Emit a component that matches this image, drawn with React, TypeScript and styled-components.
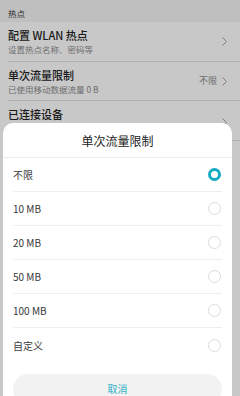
import React from "react";
import styled, { createGlobalStyle } from "styled-components";

const Global = createGlobalStyle`
  html, body { margin: 0; padding: 0; }
  body { width: 240px; height: 396px; overflow: hidden; font-family: "Noto Sans CJK SC", "Noto Sans", sans-serif; }
`;

const Screen = styled.div`
  position: relative;
  width: 240px;
  height: 396px;
  overflow: hidden;
  background: #fafafa;
`;

const SectionHeader = styled.div`
  height: 22px;
  box-sizing: border-box;
  padding: 0 0 3px 8px;
  display: flex;
  align-items: flex-end;
  background: #efefef;
  color: #333;
  font-size: 8.5px;
  line-height: 12px;
`;

const Row = styled.div`
  padding-left: 8px;
`;

const RowInner = styled.div<{ $h: number }>`
  height: ${(p) => p.$h}px;
  box-sizing: border-box;
  display: flex;
  align-items: flex-start;
  padding: 6px 13px 0 0;
  border-bottom: 1px solid #dcdcdc;
`;

const RowText = styled.div`
  flex: 1;
  display: flex;
  flex-direction: column;
  gap: 1px;
`;

const Title = styled.div`
  font-size: 11px;
  line-height: 14px;
  color: #222;
  font-weight: 500;
`;

const Sub = styled.div`
  font-size: 8.5px;
  line-height: 12px;
  color: #8a8a8a;
`;

const Trail = styled.div<{ $top: number }>`
  display: flex;
  align-items: center;
  gap: 5px;
  margin-top: ${(p) => p.$top}px;
  color: #888;
  font-size: 9px;
  line-height: 12px;
`;

const Overlay = styled.div`
  position: absolute;
  inset: 0;
  background: rgba(0, 0, 0, 0.2);
`;

const Sheet = styled.div`
  position: absolute;
  top: 123px;
  left: 3px;
  width: 229px;
  height: 300px;
  background: #fff;
  border-radius: 10px 10px 0 0;
  display: flex;
  flex-direction: column;
`;

const SheetTitle = styled.div`
  height: 34px;
  display: flex;
  align-items: center;
  justify-content: center;
  border-bottom: 1px solid #ececec;
  font-size: 12px;
  color: #222;
`;

const Options = styled.div`
  padding: 0 10px;
  display: flex;
  flex-direction: column;
`;

const Option = styled.div<{ $last?: boolean }>`
  height: ${(p) => (p.$last ? 35 : 34)}px;
  box-sizing: border-box;
  display: flex;
  align-items: center;
  justify-content: space-between;
  border-bottom: ${(p) => (p.$last ? "none" : "1px solid #eeeeee")};
  font-size: 10px;
  color: #383838;
`;

const Radio = styled.span<{ $on?: boolean }>`
  width: 13px;
  height: 13px;
  box-sizing: border-box;
  border-radius: 50%;
  margin-right: 1px;
  border: ${(p) => (p.$on ? "3.5px solid #13a9c3" : "1px solid #dcdcdc")};
  background: #fff;
`;

const CancelButton = styled.div`
  margin: 11px 10px 0;
  height: 30px;
  border-radius: 15px;
  background: #f2f2f2;
  display: flex;
  align-items: center;
  justify-content: center;
  color: #34b1c8;
  font-size: 10px;
  padding-bottom: 2px;
  box-sizing: border-box;
`;

const Chevron = () => (
  <svg width="5" height="9" viewBox="0 0 5 9">
    <polyline points="0.5,0.5 4.5,4.5 0.5,8.5" fill="none" stroke="#9a9a9a" strokeWidth="1" />
  </svg>
);

const options = ["不限", "10 MB", "20 MB", "50 MB", "100 MB", "自定义"];

export default function App() {
  return (
    <>
      <Global />
      <Screen>
        <SectionHeader>热点</SectionHeader>
        <Row>
          <RowInner $h={40}>
            <RowText>
              <Title>配置 WLAN 热点</Title>
              <Sub>设置热点名称、密码等</Sub>
            </RowText>
            <Trail $top={9}>
              <Chevron />
            </Trail>
          </RowInner>
        </Row>
        <Row>
          <RowInner $h={39}>
            <RowText>
              <Title>单次流量限制</Title>
              <Sub>已使用移动数据流量 0 B</Sub>
            </RowText>
            <Trail $top={7}>
              不限
              <Chevron />
            </Trail>
          </RowInner>
        </Row>
        <Row>
          <RowInner $h={40}>
            <RowText>
              <Title>已连接设备</Title>
              <Sub>已连接 0 台</Sub>
            </RowText>
            <Trail $top={11}>
              <Chevron />
            </Trail>
          </RowInner>
        </Row>
        <Overlay />
        <Sheet>
          <SheetTitle>单次流量限制</SheetTitle>
          <Options>
            {options.map((o, i) => (
              <Option key={o} $last={i === options.length - 1}>
                {o}
                <Radio $on={i === 0} />
              </Option>
            ))}
          </Options>
          <CancelButton>取消</CancelButton>
        </Sheet>
      </Screen>
    </>
  );
}
